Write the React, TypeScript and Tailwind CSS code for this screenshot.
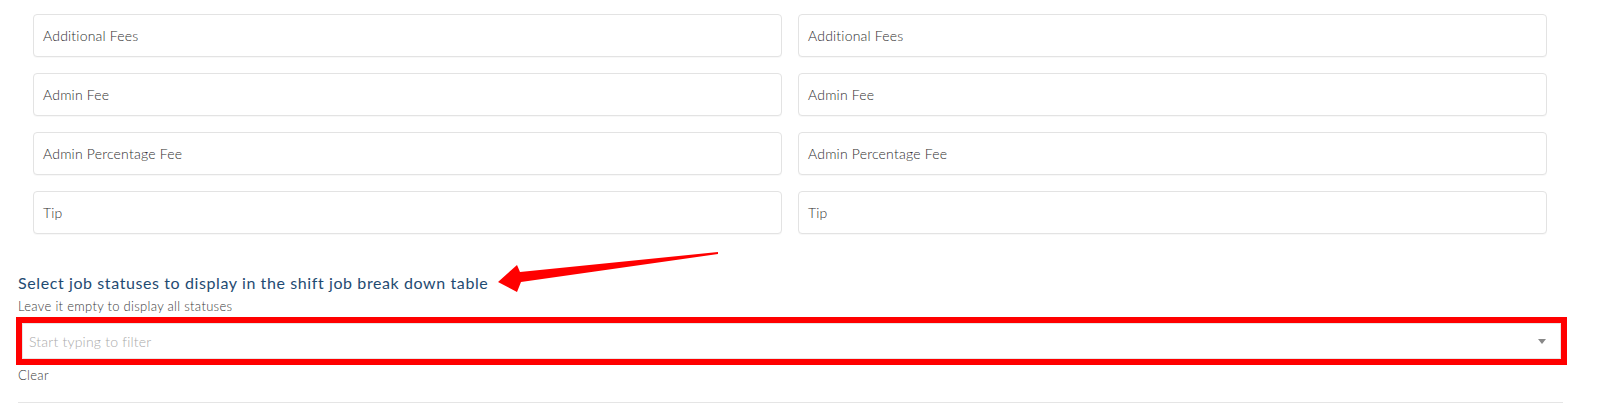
const fields = ["Additional Fees", "Admin Fee", "Admin Percentage Fee", "Tip"];

function FeeInput({ label }: { label: string }) {
  return (
    <div className="h-[43px] flex items-center px-[9px] border border-[#e3e3e3] rounded-[4px] bg-white shadow-[0_1px_1px_rgba(0,0,0,0.03)] text-[14px] tracking-[0.2px] font-light text-[#2e2e2e]">
      {label}
    </div>
  );
}

export default function App() {
  return (
    <div className="relative w-[1600px] h-[411px] bg-white font-['Lato',sans-serif] overflow-hidden">
      {/* fee fields, left and right column */}
      <div className="pl-[33px] pr-[53px] pt-[14px] grid grid-cols-2 gap-x-4 gap-y-4">
        {fields.flatMap((f) => [
          <FeeInput key={"l" + f} label={f} />,
          <FeeInput key={"r" + f} label={f} />,
        ])}
      </div>

      {/* job statuses */}
      <div className="pl-[16px] pr-[33px] mt-[37px]">
        <h3 className="pl-[2px] text-[16px] leading-[24px] tracking-[0.6px] text-[#1f4b72]">
          Select job statuses to display in the shift job break down table
        </h3>
        <p className="pl-[2px] mt-[2px] text-[13px] leading-[18px] tracking-[0.3px] font-light text-[#3a3a3a]">
          Leave it empty to display all statuses
        </p>
        <div className="mt-[2px] h-[48px] border-[6px] border-[#ff0000]">
          <div className="h-full flex items-center justify-between pl-[6px] pr-[14px] border border-[#e6e6e6]">
            <span className="text-[14px] tracking-[0.2px] font-light text-[#aaa]">Start typing to filter</span>
            <span className="w-0 h-0 border-l-[4px] border-r-[4px] border-t-[5px] border-l-transparent border-r-transparent border-t-[#888]" />
          </div>
        </div>
        <p className="pl-[2px] mt-[1px] text-[13px] leading-[18px] tracking-[0.3px] font-light text-[#3a3a3a]">Clear</p>
        <div className="ml-[2px] mr-[4px] mt-[18px] border-t border-[#e5e5e5]" />
      </div>

      {/* annotation arrow */}
      <svg className="absolute left-0 top-0 pointer-events-none" width="1600" height="411">
        <polygon points="718,252 520,272 517,265 498,282 517,292 521,282 718,254" fill="#ff0000" />
      </svg>
    </div>
  );
}
